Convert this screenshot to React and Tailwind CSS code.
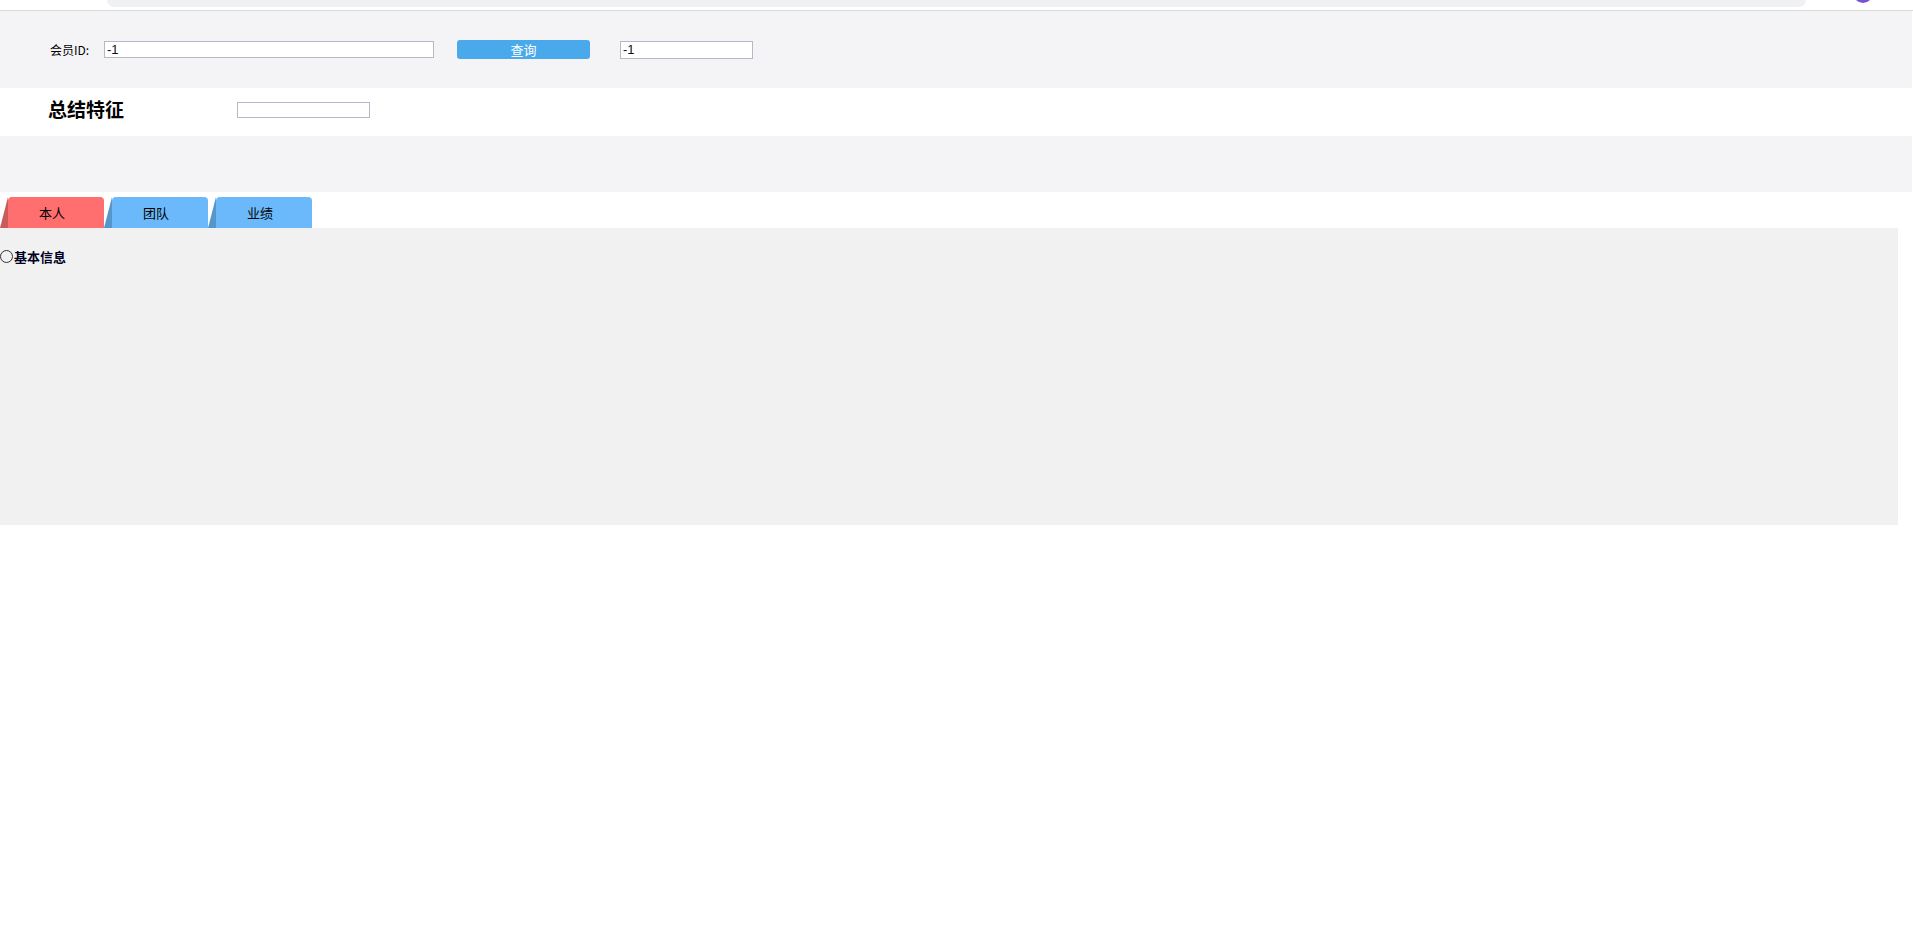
import React from "react";

const cjk = { fontFamily: '"Noto Sans CJK SC", "Liberation Sans", sans-serif' };
const arial = { fontFamily: '"Liberation Sans", sans-serif' };

const Tab = ({ label, active }) => {
    const main = active ? "bg-[#ff6f6f]" : "bg-[#6bb9fb]";
    const edge = active ? "border-b-[#c95b5b]" : "border-b-[#5597cb]";
    return (
        <div className="flex items-end h-[31px] w-[104px]">
            {/* slanted left strip */}
            <div
                className={`w-0 h-0 border-l-[8px] border-l-transparent border-b-[31px] ${edge}`}
            />
            <div
                className={`flex-1 h-full rounded-t-[4px] flex items-center justify-center pr-[8px] text-[13px] text-black ${main}`}
                style={cjk}
            >
                {label}
            </div>
        </div>
    );
};

export default function App() {
    return (
        <div className="w-[1913px] min-h-[930px] bg-white" style={cjk}>
            {/* browser chrome remnant */}
            <div className="h-[11px] flex border-b border-[#d9d9db] overflow-hidden">
                <div className="ml-[107px] w-[1699px] h-[7px] bg-[#f0f1f3] rounded-b-[14px]" />
                <div className="ml-[47px] w-[20px] h-[20px] -mt-[17px] rounded-full bg-[#7b52d3]" />
            </div>

            {/* search bar */}
            <div className="w-[1912px] h-[77px] bg-[#f4f4f6] flex items-center">
                <span className="ml-[50px] w-[54px] text-[12px] text-black">会员ID:</span>
                <div className="w-[330px] h-[17px] bg-white border border-[#b5b8c8] flex items-center px-[2px] text-[13px] font-normal text-[#111]" style={arial}>
                    -1
                </div>
                <button className="ml-[23px] w-[133px] h-[19px] bg-[#49a9ea] rounded-[3px] text-white text-[13px] flex items-center justify-center">
                    查询
                </button>
                <div className="ml-[30px] w-[133px] h-[18px] bg-white border border-[#b5b8c8] flex items-center px-[2px] text-[13px] font-normal text-[#111]" style={arial}>
                    -1
                </div>
            </div>

            {/* summary row */}
            <div className="h-[48px] flex items-start pt-[10px]">
                <span className="ml-[48px] w-[189px] text-[19px] font-bold text-black leading-[22px]">总结特征</span>
                <div className="mt-[4px] w-[133px] h-[16px] bg-white border border-[#b5b8c8]" />
            </div>

            <div className="w-[1912px] h-[56px] bg-[#f4f4f6]" />

            {/* tabs */}
            <div className="mt-[5px] flex">
                <Tab label="本人" active />
                <Tab label="团队" />
                <Tab label="业绩" />
            </div>

            <div className="w-[1898px] h-[297px] bg-[#f1f1f1] pt-[19px]">
                <div className="flex items-center">
                    <span className="w-[13px] h-[13px] rounded-full border border-[#333] bg-transparent" />
                    <span className="ml-[1px] text-[13px] font-bold text-[#000022]">基本信息</span>
                </div>
            </div>
        </div>
    );
}
